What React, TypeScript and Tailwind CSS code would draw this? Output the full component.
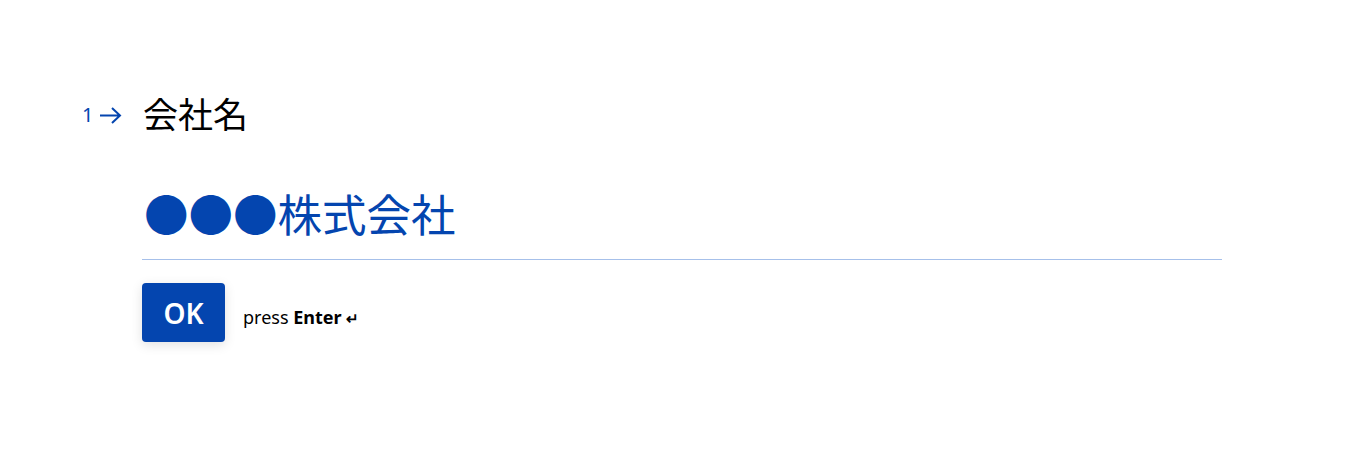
import React from 'react'

const font = { fontFamily: '"Noto Sans", "Noto Sans CJK JP", sans-serif' }

export default function App() {
  return (
    <div className="w-[1360px] h-[465px] bg-white" style={font}>
      <div className="flex pl-[82px] pt-[90px]">
        <div className="w-[60px] flex items-center gap-[6px] h-[50px] text-[#0445AF]">
          <span className="text-[20px] leading-none">1</span>
          <svg width="23" height="19" viewBox="0 0 23 19" fill="none" stroke="#0445AF" strokeWidth="2">
            <path d="M1 9.5h20M13 2l8 7.5-8 7.5" />
          </svg>
        </div>
        <div className="w-[1080px] flex flex-col">
          <h1 className="text-[35px] leading-[50px] text-black pl-[1px]" style={font}>会社名</h1>
          <div className="mt-[46px] pb-[15px]">
            <div className="text-[44.5px] leading-[58px] text-[#0445AF] pl-[2px]">●●●株式会社</div>
          </div>
          <div className="h-px bg-[#a6c0ea]" />
          <div className="mt-[23px] flex items-center gap-[18px]">
            <button className="w-[83px] h-[59px] rounded-[4px] bg-[#0445AF] text-white text-[28px] font-semibold shadow-[0_3px_12px_rgba(0,0,0,0.12)]">
              OK
            </button>
            <span className="mt-[9px] text-[18px] text-black">
              press <b>Enter</b> <span className="text-[15px] font-bold">↵</span>
            </span>
          </div>
        </div>
      </div>
    </div>
  )
}
